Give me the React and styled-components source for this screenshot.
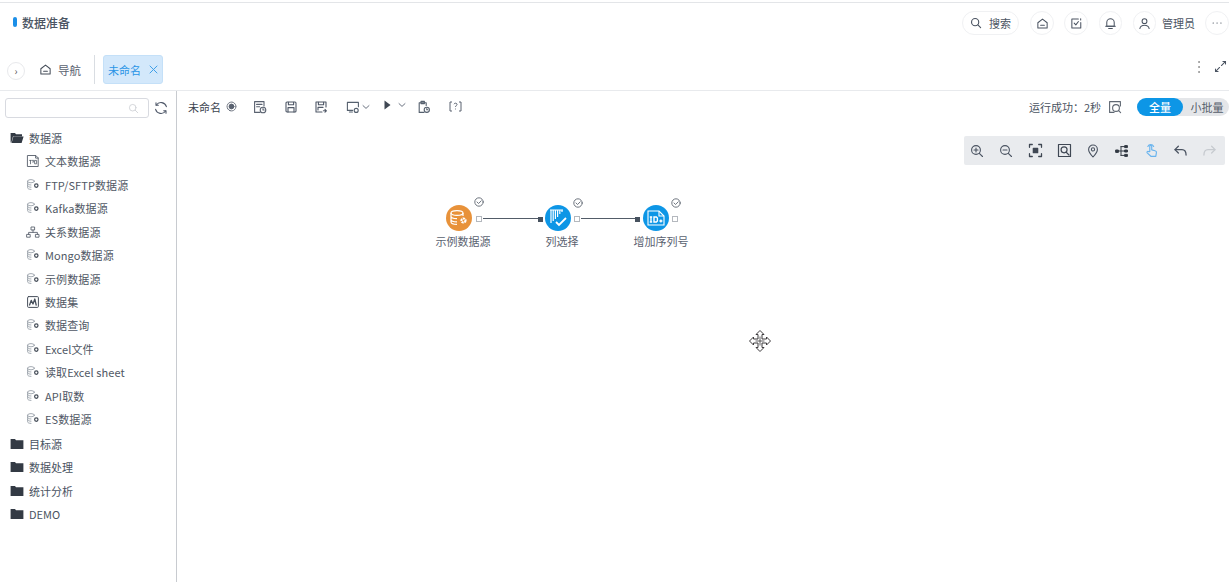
import React from 'react';
import styled, { createGlobalStyle } from 'styled-components';

const Global = createGlobalStyle`
  html, body { margin: 0; padding: 0; background: #fff; }
  body { font-family: "Noto Sans CJK SC", "Liberation Sans", sans-serif; color: #4a5361; overflow: hidden; }
  * { box-sizing: border-box; }
`;

const Page = styled.div`
  width: 1229px; height: 582px; display: flex; flex-direction: column; padding-top: 2px; overflow: hidden;
`;
const Header = styled.header`
  height: 47px; border-top: 1px solid #e3e5e8; display: flex; align-items: center; justify-content: space-between;
  padding: 0 0 0 13px; flex: none;
`;
const Title = styled.div`
  display: flex; align-items: center; gap: 5px; font-size: 12px; font-weight: 500; color: #4b5563; margin-top: -8px;
`;
const TitleMark = styled.span`
  width: 4px; height: 10px; border-radius: 2px; background: #1c8fe8;
`;
const HeaderRight = styled.div`
  display: flex; align-items: center; margin-top: -6px;
`;
const Pill = styled.div`
  height: 24px; width: ${p => p.$w || 24}px; border: 1px solid #f0f1f3; border-radius: 12px; margin-left: ${p => p.$ml || 0}px;
  display: flex; align-items: center; justify-content: center; gap: 7px; font-size: 11px; color: #4b5563;
`;
const UserName = styled.span`
  font-size: 11px; color: #4b5563; margin-left: 6px; width: 32px; white-space: nowrap;
`;
const TabBar = styled.div`
  height: 42px; display: flex; align-items: center; padding: 0 2px 0 7px; border-bottom: 1px solid #e8eaed; flex: none; position: relative;
`;
const Toggle = styled.div`
  width: 18px; height: 18px; border: 1px solid #e8e9ec; border-radius: 50%; display: flex; align-items: center; justify-content: center;
  font-size: 10px; color: #555; margin-top: 2px;
`;
const NavTab = styled.div`
  display: flex; align-items: center; gap: 6px; font-size: 11.5px; color: #5a6270; margin-left: 14px; width: 55px;
`;
const Divider = styled.div`
  width: 1px; height: 29px; background: #d9dde2; margin-right: 8px;
`;
const ActiveTab = styled.div`
  height: 29px; width: 60px; background: #d3e8fb; border: 1px solid #c4e0f8; border-radius: 3px; color: #2a95e6;
  font-size: 11px; display: flex; align-items: center; justify-content: space-between; padding: 0 4px;
`;
const TabTools = styled.div`
  margin-left: auto; display: flex; align-items: center; gap: 11px; margin-top: -6px;
`;
const Body = styled.div`
  flex: 1; display: flex; min-height: 0;
`;
const Sidebar = styled.aside`
  width: 177px; border-right: 1px solid #c8cbd0; padding: 7px 0 0 5px; flex: none;
`;
const SearchRow = styled.div`
  display: flex; align-items: center; gap: 5px; margin-bottom: 8px;
`;
const SearchBox = styled.div`
  width: 144px; height: 20px; border: 1px solid #d8dae0; border-radius: 3px; display: flex; align-items: center; justify-content: flex-end; padding-right: 9px;
`;
const Folder = styled.div`
  display: flex; align-items: center; gap: 5px; height: 23.6px; padding-left: 5px; font-size: 11px; color: #4a5361;
`;
const ItemList = styled.div`
  margin-bottom: 1px;
`;
const Item = styled.div`
  display: flex; align-items: center; gap: 5px; height: 23.45px; padding-left: 21px; font-size: 11px; color: #4f5764; letter-spacing: 0.1px;
`;
const Main = styled.main`
  flex: 1; position: relative; min-width: 0;
`;
const ToolRow = styled.div`
  height: 31px; display: flex; align-items: center; padding: 0 0 0 11px;
`;
const DocName = styled.span`
  font-size: 11px; color: #3c4450; margin-right: 5px;
`;
const ToolIcon = styled.span`
  display: inline-flex; align-items: center; margin-left: ${p => p.$ml || 0}px; margin-top: ${p => p.$up ? -4 : 0}px;
`;
const Status = styled.div`
  margin-left: auto; display: flex; align-items: center; font-size: 11px; color: #4a5361;
`;
const Switch = styled.div`
  margin-left: 15px; height: 18px; width: 92px; border-radius: 9px; background: #e4e6e9; display: flex; font-size: 11px;
`;
const SwitchOn = styled.span`
  width: 46px; background: #0d96e6; color: #fff; border-radius: 9px; display: flex; align-items: center; justify-content: center; font-weight: 500;
`;
const SwitchOff = styled.span`
  flex: 1; display: flex; align-items: center; justify-content: center; color: #555d69; padding-left: 2px; white-space: nowrap;
`;
const ZoomBar = styled.div`
  position: absolute; top: 45px; right: 4px; width: 261px; height: 29px; background: #e9ebee; border-radius: 2px;
  display: grid; grid-template-columns: repeat(9, 29px); align-items: center; padding-left: 6px;
`;
const Node = styled.div`
  position: absolute; left: ${p => p.$x}px; top: ${p => p.$y}px; width: 26px; height: 26px; border-radius: 50%;
  background: ${p => p.$bg}; display: flex; align-items: center; justify-content: center;
`;
const NodeLabel = styled.div`
  position: absolute; left: ${p => p.$x}px; top: ${p => p.$y}px; width: 80px; text-align: center; font-size: 11px; color: #5a6270; white-space: nowrap;
`;
const Port = styled.span`
  position: absolute; left: ${p => p.$x}px; top: ${p => p.$y}px; width: 6px; height: 6px; border: 1px solid #b4b8be; background: #fff;
`;
const InPort = styled.span`
  position: absolute; left: ${p => p.$x}px; top: ${p => p.$y}px; width: 5px; height: 5px; background: #47525f;
`;
const Edge = styled.span`
  position: absolute; left: ${p => p.$x}px; top: ${p => p.$y}px; width: ${p => p.$w}px; height: 1px; background: #525c68;
`;
const Check = styled.span`
  position: absolute; left: ${p => p.$x}px; top: ${p => p.$y}px; display: flex;
`;
const MoveCursor = styled.span`
  position: absolute; left: 571px; top: 238px; display: flex;
`;

const S = ({ w = 14, h, c = '#4a5361', sw = 1.1, children, fill = 'none', vb }) => (
  <svg width={w} height={h || w} viewBox={vb || '0 0 14 14'} fill={fill} stroke={c} strokeWidth={sw} strokeLinecap="round" strokeLinejoin="round">{children}</svg>
);

const Search = ({ c, w = 12, sw = 1.3 }) => <S w={w} c={c} sw={sw}><circle cx="6" cy="6" r="4.2" /><path d="M9.2 9.2L12.4 12.4" /></S>;
const Home = ({ c }) => <S w={13} c={c}><path d="M2 6.2L7 2.2l5 4v5.6H2z" /><path d="M5 9h4" /></S>;
const Task = () => <S w={13}><path d="M9 2.2H2v9.6h9.6V6" /><path d="M4.5 6.5l1.8 2 2.8-3.6" /><path d="M11.5 2v1.2" /></S>;
const Bell = () => <S w={13}><path d="M3 10V6a4 4 0 018 0v4z" /><path d="M1.8 10h10.4M5 12.4h4" /></S>;
const User = () => <S w={13}><circle cx="7" cy="4.5" r="2.6" /><path d="M2 12.4c.6-2.6 2.6-3.4 5-3.4s4.4.8 5 3.4" /></S>;

const DataIcon = () => (
  <S w={14} c="#9aa1aa" sw={0.9}>
    <ellipse cx="5" cy="3.2" rx="3.4" ry="1.6" />
    <path d="M1.6 3.2v6.6c0 .9 1.5 1.6 3.4 1.6M1.6 5.4c0 .9 1.5 1.6 3.4 1.6M1.6 7.6c0 .9 1.5 1.6 3.4 1.6" />
    <circle cx="10.3" cy="7.6" r="1.7" stroke="#444c57" strokeWidth="1.2" />
  </S>
);
const TextIcon = () => (
  <S w={14} c="#565e6a" sw={0.9}>
    <path d="M1.8 1.5h8l2.4 2.4v8.6H1.8z" /><path d="M9.6 1.5v2.6h2.6" />
    <path d="M3.6 6.4h1.8M4.5 6.4v3.4M6.4 6.4h1.4v1.6H6.6M9 6.4h1.6v3.4H9z" strokeWidth="0.8" />
  </S>
);
const RelIcon = () => (
  <S w={14} c="#5c6470" sw={0.9}>
    <rect x="5.4" y="2" width="3.2" height="3" /><rect x="1" y="9.4" width="3.2" height="2.8" /><rect x="9.8" y="9.4" width="3.2" height="2.8" />
    <path d="M7 5v2.4M2.6 9.4V7.4h8.8v2" />
  </S>
);
const SetIcon = () => (
  <S w={14} c="#474f5b" sw={1}>
    <rect x="1.6" y="1.6" width="10.8" height="10.8" rx="1" />
    <path d="M3.6 10l1.6-4.6 1.8 3.6 1.8-5 1.4 6" strokeWidth="1.3" />
  </S>
);
const FolderIcon = ({ open }) => (
  <svg width="14" height="12" viewBox="0 0 14 12">
    {open
      ? <path d="M.6 1h4.4l1 1.2h6v2H3L1.4 10.6H.6zM3.4 4.6H13.6L11.6 11H1.6z" fill="#333a44" />
      : <path d="M.6 1h4.4l1 1.2h7.4V11H.6z" fill="#333a44" />}
  </svg>
);

const items = [
  ['文本数据源', TextIcon], ['FTP/SFTP数据源', DataIcon], ['Kafka数据源', DataIcon], ['关系数据源', RelIcon],
  ['Mongo数据源', DataIcon], ['示例数据源', DataIcon], ['数据集', SetIcon], ['数据查询', DataIcon],
  ['Excel文件', DataIcon], ['读取Excel sheet', DataIcon], ['API取数', DataIcon], ['ES数据源', DataIcon],
];

const CheckIcon = () => <S w={10} c="#5f6772" sw={0.9} vb="0 0 10 10"><circle cx="5" cy="5" r="4.2" /><path d="M3 5l1.6 1.5L7.2 3.8" /></S>;
const Chevron = () => <S w={8} c="#6a7280" sw={1} vb="0 0 8 8"><path d="M1 2.6L4 5.4l3-2.8" /></S>;

export default function App() {
  return (
    <Page>
      <Global />
      <Header>
        <Title><TitleMark />数据准备</Title>
        <HeaderRight>
          <Pill $w={57}><Search />搜索</Pill>
          <Pill $ml={11}><Home /></Pill>
          <Pill $ml={10}><Task /></Pill>
          <Pill $ml={11} $w={23}><Bell /></Pill>
          <Pill $ml={11} $w={23}><User /></Pill>
          <UserName>管理员</UserName>
          <Pill $ml={11}><S w={12} c="#4a5361" sw={1.4}><path d="M2.5 7h.2M7 7h.2M11.5 7h.2" /></S></Pill>
        </HeaderRight>
      </Header>
      <TabBar>
        <Toggle>›</Toggle>
        <NavTab><Home c="#444c58" />导航</NavTab>
        <Divider />
        <ActiveTab>未命名<S w={9} c="#3f9fe8" sw={1} vb="0 0 9 9"><path d="M1 1l7 7M8 1L1 8" /></S></ActiveTab>
        <TabTools>
          <S w={8} h={14} c="#444" sw={1.5} vb="0 0 8 14"><path d="M4 2h.1M4 7h.1M4 12h.1" /></S>
          <S w={13} c="#4a5361" sw={1.1}><path d="M8 6l4.4-4.4M9.6 1.6h2.8v2.8M6 8l-4.4 4.4M1.6 9.6v2.8h2.8" /></S>
        </TabTools>
      </TabBar>
      <Body>
        <Sidebar>
          <SearchRow>
            <SearchBox><Search c="#c9ccd1" w={11} sw={1} /></SearchBox>
            <S w={14} c="#50596a" sw={1.1}><path d="M12.4 5.6A5.6 5.6 0 002.4 4M1.6 8.4a5.6 5.6 0 0010 1.6" /><path d="M2 1.8V4.2h2.3M12 12.2V9.8H9.7" /></S>
          </SearchRow>
          <Folder><FolderIcon open />数据源</Folder>
          <ItemList>
            {items.map(([t, I]) => <Item key={t}><I />{t}</Item>)}
          </ItemList>
          <Folder><FolderIcon />目标源</Folder>
          <Folder><FolderIcon />数据处理</Folder>
          <Folder><FolderIcon />统计分析</Folder>
          <Folder><FolderIcon />DEMO</Folder>
        </Sidebar>
        <Main>
          <ToolRow>
            <DocName>未命名</DocName>
            <S w={11} c="#5a6270" sw={1} vb="0 0 11 11"><circle cx="5.5" cy="5.5" r="4.4" strokeDasharray="1.5 1" /><circle cx="5.5" cy="5.5" r="2.4" fill="#5a6270" /></S>
            <ToolIcon $ml={16}><S w={14} c="#5a6270"><path d="M7 12.4H1.6V1.6h9.4V6" /><path d="M3.6 4.4h5.4M3.6 6.8h3" /><circle cx="10" cy="10" r="2.8" /><path d="M10 8.6V10h1.2" /></S></ToolIcon>
            <ToolIcon $ml={18}><S w={12} c="#4f5867" vb="0 0 12 12"><rect x="1" y="1" width="10" height="10" rx="1" /><path d="M3.4 1.2v2.6h5.2V1.2M3 11V6.6h6V11" /></S></ToolIcon>
            <ToolIcon $ml={18}><S w={12} c="#4f5867" vb="0 0 12 12"><path d="M11 6V1H1v10h6" /><path d="M3.4 1.2v2.6h5.2V1.2M3 9V6.4h5" /><path d="M8.4 9.8h3M10 8.4l1.4 1.4-1.4 1.4" /></S></ToolIcon>
            <ToolIcon $ml={19}><S w={14} c="#55606e"><path d="M6.6 10.4H1.4V2.4h11v4.4" /><path d="M3.4 12h3" /><circle cx="10.2" cy="10.4" r="2" /></S></ToolIcon>
            <ToolIcon $ml={2}><Chevron /></ToolIcon>
            <ToolIcon $ml={14} $up><svg width="7" height="10" viewBox="0 0 7 10"><path d="M0.5 0.5L6.5 5 0.5 9.5z" fill="#3f4753" /></svg></ToolIcon>
            <ToolIcon $ml={7} $up><Chevron /></ToolIcon>
            <ToolIcon $ml={11}><S w={14} c="#55606e"><path d="M7 12.4H2.2V2.8h7v2.6" /><path d="M4 1.4h3.4v2.2H4z" /><circle cx="9.8" cy="9.8" r="2.6" /><path d="M9.8 8.6v1.2h1" /></S></ToolIcon>
            <ToolIcon $ml={18}><svg width="13" height="11" viewBox="0 0 13 11" fill="none" stroke="#5a6270" strokeWidth="1"><path d="M3 1H1v9h2M10 1h2v9h-2" /><path d="M5 3.2c.3-1.4 3-1.4 3 .2 0 1.2-1.5 1.2-1.5 2.6M6.5 7.6v.8" /></svg></ToolIcon>
            <Status>
              运行成功：2秒
              <ToolIcon $ml={7}><S w={14} c="#5f6772"><path d="M12.4 6V1.6H1.6v10.8H6" /><circle cx="8" cy="8" r="3.4" /><path d="M10.4 10.4l2.2 2.2" /></S></ToolIcon>
              <Switch><SwitchOn>全量</SwitchOn><SwitchOff>小批量</SwitchOff></Switch>
            </Status>
          </ToolRow>
          <ZoomBar>
            <S w={14} c="#4a5361"><circle cx="6" cy="6" r="4.4" /><path d="M9.3 9.3l3.2 3.2M4 6h4M6 4v4" /></S>
            <S w={14} c="#4a5361"><circle cx="6" cy="6" r="4.4" /><path d="M9.3 9.3l3.2 3.2M4 6h4" /></S>
            <S w={15} c="#3f4753" sw={1.2}><path d="M1.4 4V1.4H4M10 1.4h2.6V4M12.6 10v2.6H10M4 12.6H1.4V10" /><rect x="5" y="5" width="4" height="4" fill="#3f4753" /></S>
            <S w={15} c="#3f4753"><rect x="1.4" y="1.4" width="11.2" height="11.2" /><circle cx="6.6" cy="6.4" r="2.8" /><path d="M8.6 8.6l2.6 2.6" /></S>
            <S w={14} c="#4a5361"><path d="M7 13C4.6 10.4 2.6 7.8 2.6 5.4a4.4 4.4 0 018.8 0C11.4 7.8 9.4 10.4 7 13z" /><circle cx="7" cy="5.4" r="1.6" /></S>
            <S w={14} c="#333a44" sw={1}><path d="M2 7h8M6 2.6v8.8M6 2.6h4M6 11.4h4" /><rect x="1" y="6" width="2.4" height="2.4" fill="#333a44" /><rect x="10" y="1.6" width="2.4" height="2" fill="#333a44" /><rect x="10" y="6" width="2.4" height="2" fill="#333a44" /><rect x="10" y="10.4" width="2.4" height="2" fill="#333a44" /></S>
            <S w={15} c="#6ab4ee"><path d="M5.4 8V3a.9.9 0 011.8 0v3.4l3.2.8c.9.2 1.4.9 1.2 1.8l-.6 3.4H6.4L3 9.2c-.7-.8.4-1.8 1.2-1.2z" /><path d="M3.6 3.2a3 3 0 015.4 0" /></S>
            <S w={15} c="#4a5361" sw={1.2}><path d="M5 3L1.8 6.2 5 9.4" /><path d="M2 6.2h6.4c2.4 0 3.8 1.6 3.8 5" /></S>
            <S w={15} c="#c6cacf" sw={1.2}><path d="M9 3l3.2 3.2L9 9.4" /><path d="M12 6.2H5.6c-2.4 0-3.8 1.6-3.8 5" /></S>
          </ZoomBar>

          <Edge $x={306} $y={127} $w={59} />
          <Edge $x={404} $y={127} $w={57} />
          <Node $x={269} $y={114} $bg="#e8923a">
            <svg width="20" height="18" viewBox="0 0 20 18" fill="none" stroke="#fff" strokeWidth="1.2">
              <ellipse cx="8" cy="4" rx="6" ry="2.4" /><path d="M2 4v9c0 1.3 2.7 2.4 6 2.4M2 7.2c0 1.3 2.7 2.4 6 2.4M2 10.4c0 1.3 2.7 2.4 6 2.4M14 4v3" />
              <circle cx="14.5" cy="11.5" r="2" strokeWidth="2.2" strokeDasharray="2 0.6" />
            </svg>
          </Node>
          <Check $x={297} $y={106}><CheckIcon /></Check>
          <Port $x={299} $y={125} />
          <NodeLabel $x={246} $y={142}>示例数据源</NodeLabel>

          <InPort $x={361} $y={126} />
          <Node $x={368} $y={114} $bg="#0d96e6">
            <svg width="20" height="20" viewBox="0 0 20 20" fill="none" stroke="#fff" strokeWidth="1.2">
              <path d="M2 2h13M3 2v13M5.2 2v11M7.4 2v9M9.6 2v7M11.8 2v4M14 2v2" />
              <path d="M8 14l3 3 7-7" strokeWidth="1.8" />
            </svg>
          </Node>
          <Check $x={396} $y={107}><CheckIcon /></Check>
          <Port $x={397} $y={125} />
          <NodeLabel $x={345} $y={142}>列选择</NodeLabel>

          <InPort $x={458} $y={126} />
          <Node $x={466} $y={114} $bg="#0d96e6">
            <svg width="20" height="20" viewBox="0 0 20 20" fill="none" stroke="#fff" strokeWidth="1.1">
              <path d="M2 3h11l5 5v9H2z" /><path d="M13 3v5h5" />
              <path d="M5 9v5M3.8 9h2.4M3.8 14h2.4M8 9h2.4l1 1v3l-1 1H8z" strokeWidth="1.4" />
              <path d="M13.4 13h3M14.9 11.5v3" strokeWidth="1.3" />
            </svg>
          </Node>
          <Check $x={494} $y={107}><CheckIcon /></Check>
          <Port $x={495} $y={125} />
          <NodeLabel $x={444} $y={142}>增加序列号</NodeLabel>

          <MoveCursor>
            <svg width="24" height="24" viewBox="0 0 24 24" fill="#fff" stroke="#3d3a3d" strokeWidth="1" strokeLinejoin="miter">
              <path d="M12 1.5L16 5.5H14V10H18.5V8L22.5 12 18.5 16V14H14V18.5H16L12 22.5 8 18.5H10V14H5.5V16L1.5 12 5.5 8V10H10V5.5H8z" />
              <path d="M12 7.5V16.5M7.5 12H16.5" strokeWidth="0.8" />
            </svg>
          </MoveCursor>
        </Main>
      </Body>
    </Page>
  );
}
